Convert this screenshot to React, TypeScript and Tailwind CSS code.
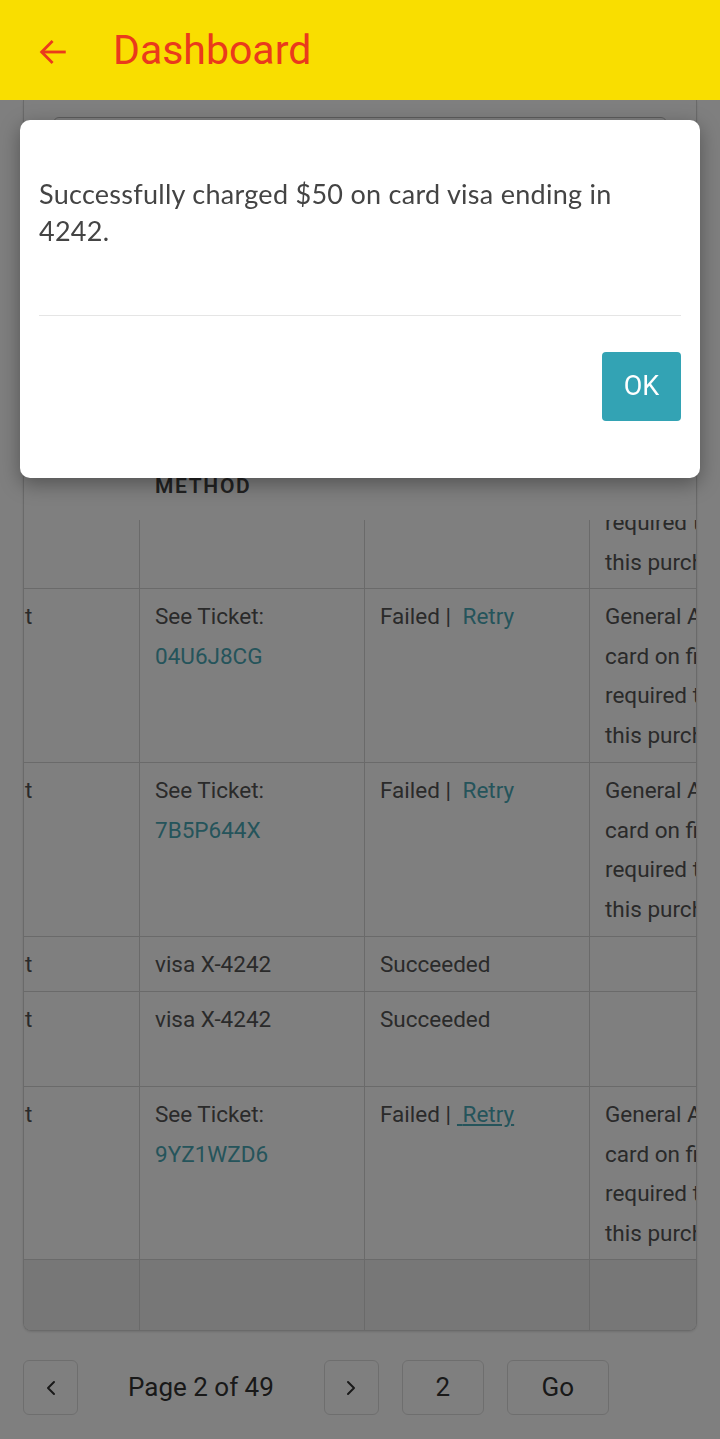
import { ChevronLeft, ChevronRight } from "lucide-react"

type Row = {
  first: string
  method: string[]
  ticket?: string
  status: "failed" | "ok"
  underline?: boolean
  note: string[]
  h: string
}

const rows: Row[] = [
  { first: "t", method: ["See Ticket:"], ticket: "04U6J8CG", status: "failed", note: ["General A", "card on fi", "required t", "this purch"], h: "h-[174px]" },
  { first: "t", method: ["See Ticket:"], ticket: "7B5P644X", status: "failed", note: ["General A", "card on fi", "required t", "this purch"], h: "h-[174px]" },
  { first: "t", method: ["visa X-4242"], status: "ok", note: [], h: "h-[55px]" },
  { first: "t", method: ["visa X-4242"], status: "ok", note: [], h: "h-[95px]" },
  { first: "t", method: ["See Ticket:"], ticket: "9YZ1WZD6", status: "failed", underline: true, note: ["General A", "card on fi", "required t", "this purch"], h: "h-[173px]" },
]

export default function App() {
  return (
    <div className="relative min-h-[1439px] bg-white font-['Roboto',sans-serif] text-[#555]">
      {/* Top bar */}
      <header className="relative z-30 flex h-[100px] items-center bg-[#f9de00] px-[36px]">
        <svg width="34" height="34" viewBox="0 0 24 24" fill="none" stroke="#ea3a1c" strokeWidth="2" strokeLinecap="square" className="mt-[4px]">
          <path d="M20 12H5" />
          <path d="M11 5l-7 7 7 7" />
        </svg>
        <h1 className="ml-[43px] text-[41px] leading-none text-[#ea3a1c]">Dashboard</h1>
      </header>

      <div className="px-[23px]">
        {/* Card with table */}
        <div className="overflow-hidden rounded-b-[8px] border-x border-b border-[#d4d4d4] shadow-sm">
          <div className="px-[29px] pt-[17px]">
            <div className="h-[120px] rounded-[6px] border border-[#bbb]" />
          </div>

          {/* Table header */}
          <div className="flex h-[283px] items-end pb-[14px] text-[21px] font-semibold tracking-[0.08em] text-[#444]">
            <div className="w-[116px] shrink-0" />
            <div className="w-[225px] shrink-0 pl-[15px] leading-[39px]">
              <div>PAYMENT</div>
              <div>METHOD</div>
            </div>
          </div>

          <div className="text-[22.5px] leading-[39.5px]">
            {/* Partially hidden row */}
            <div className="flex h-[69px] overflow-hidden border-b border-[#d4d4d4]">
              <div className="w-[116px] shrink-0 border-r border-[#d4d4d4]" />
              <div className="w-[225px] shrink-0 border-r border-[#d4d4d4]" />
              <div className="w-[225px] shrink-0 border-r border-[#d4d4d4]" />
              <div className="min-w-0 flex-1 whitespace-nowrap pl-[15px] -mt-[17px]">
                <div>required t</div>
                <div>this purch</div>
              </div>
            </div>

            {rows.map((r, i) => (
              <div key={i} className={`flex ${r.h} overflow-hidden border-b border-[#d4d4d4]`}>
                <div className="w-[116px] shrink-0 border-r border-[#d4d4d4] py-2 pl-[1px]">{r.first}</div>
                <div className="w-[225px] shrink-0 border-r border-[#d4d4d4] py-2 pl-[15px]">
                  {r.method.map((m) => (
                    <div key={m}>{m}</div>
                  ))}
                  {r.ticket && <div className="text-[#4aa9b6]">{r.ticket}</div>}
                </div>
                <div className="w-[225px] shrink-0 border-r border-[#d4d4d4] py-2 pl-[15px]">
                  {r.status === "ok" ? (
                    "Succeeded"
                  ) : (
                    <span>
                      Failed |
                      <span className={`ml-[6px] text-[#4aa9b6] ${r.underline ? "underline" : ""}`}>
                        {"\u00a0"}Retry
                      </span>
                    </span>
                  )}
                </div>
                <div className="min-w-0 flex-1 overflow-hidden whitespace-nowrap py-2 pl-[15px]">
                  {r.note.map((n) => (
                    <div key={n}>{n}</div>
                  ))}
                </div>
              </div>
            ))}

            <div className="flex h-[70px] bg-[#eee]">
              <div className="w-[116px] shrink-0 border-r border-[#d4d4d4]" />
              <div className="w-[225px] shrink-0 border-r border-[#d4d4d4]" />
              <div className="w-[225px] shrink-0 border-r border-[#d4d4d4]" />
              <div className="flex-1" />
            </div>
          </div>
        </div>

        {/* Pagination */}
        <div className="mt-[29px] flex items-center text-[26px] text-[#333]">
          <button className="flex h-[55px] w-[55px] items-center justify-center rounded-[6px] border border-[#ddd]">
            <ChevronLeft className="h-[24px] w-[24px]" strokeWidth={2} />
          </button>
          <span className="mx-[50px]">Page 2 of 49</span>
          <button className="flex h-[55px] w-[55px] items-center justify-center rounded-[6px] border border-[#ddd]">
            <ChevronRight className="h-[24px] w-[24px]" strokeWidth={2} />
          </button>
          <div className="ml-[23px] flex h-[55px] w-[82px] items-center justify-center rounded-[6px] border border-[#ddd]">2</div>
          <button className="ml-[23px] flex h-[55px] w-[102px] items-center justify-center rounded-[6px] border border-[#ddd]">Go</button>
        </div>
      </div>

      {/* Backdrop */}
      <div className="fixed inset-0 z-20 bg-black/50" />

      {/* Dialog */}
      <div className="fixed left-[20px] right-[20px] top-[120px] z-40 h-[358px] rounded-[10px] bg-white px-[19px] pt-[55px] shadow-[0_6px_20px_rgba(0,0,0,0.35)] font-['Lato',sans-serif]">
        <p className="text-[27px] leading-[37px] tracking-[0.01em] text-[#444]">
          Successfully charged $50 on card visa ending in 4242.
        </p>
        <div className="mt-[66px] border-t border-[#e5e5e5]" />
        <div className="mt-[36px] flex justify-end">
          <button className="h-[69px] w-[79px] rounded-[4px] bg-[#33a3b4] text-[27px] text-white font-['Roboto',sans-serif]">OK</button>
        </div>
      </div>
    </div>
  )
}
